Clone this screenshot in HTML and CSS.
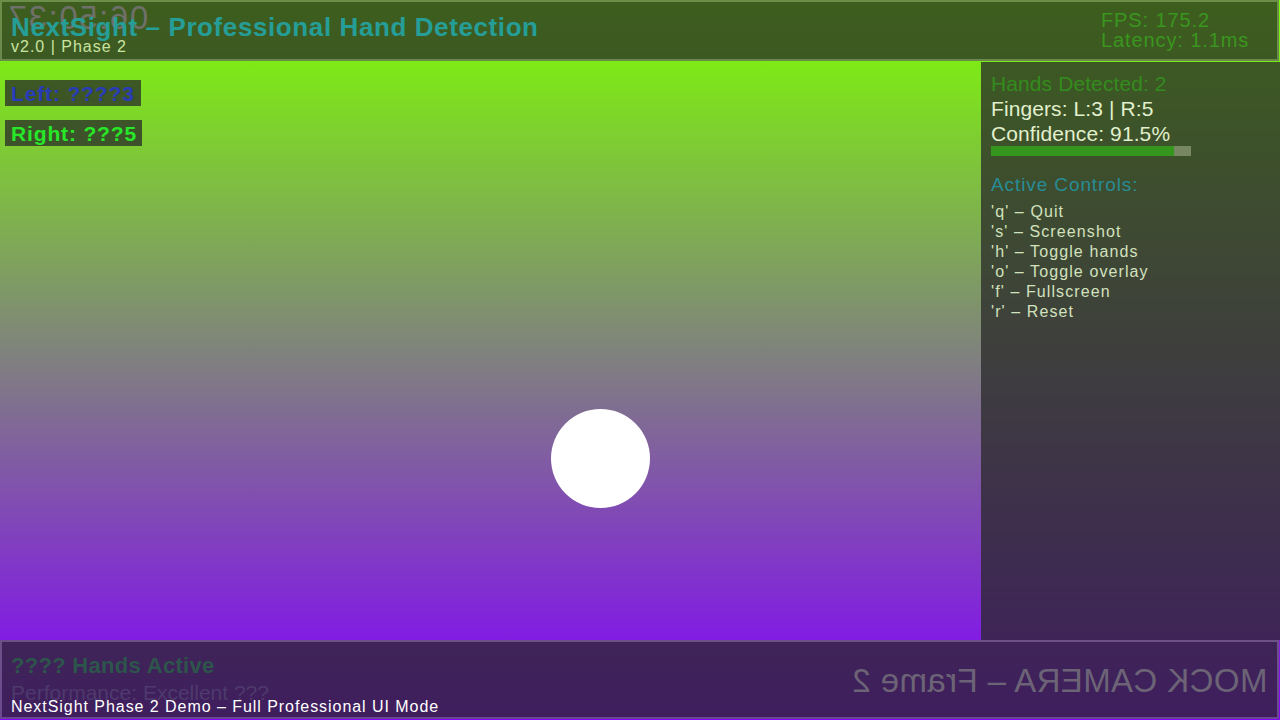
FILE: index.html
```html
<!DOCTYPE html>
<html>
<head>
<meta charset="utf-8">
<link rel="stylesheet" href="styles.css">
</head>
<body>
<div class="app">
  <header class="topbar">
    <div class="ghost-time">06:50:37</div>
    <div class="title-block">
      <div class="title">NextSight – Professional Hand Detection</div>
      <div class="version">v2.0 | Phase 2</div>
    </div>
    <div class="perf">
      <div class="perf-line">FPS: 175.2</div>
      <div class="perf-line">Latency: 1.1ms</div>
    </div>
  </header>

  <main class="canvas">
    <div class="hand-tag tag-left">Left: ????3</div>
    <div class="hand-tag tag-right">Right: ???5</div>
    <div class="blob"></div>
  </main>

  <aside class="side">
    <div class="side-stat stat-green">Hands Detected: 2</div>
    <div class="side-stat stat-light">Fingers: L:3 | R:5</div>
    <div class="side-stat stat-light">Confidence: 91.5%</div>
    <div class="conf-bar"><div class="conf-fill" style="width: 91.5%"></div></div>
    <div class="controls-title">Active Controls:</div>
    <ul class="controls">
      <li>'q' – Quit</li>
      <li>'s' – Screenshot</li>
      <li>'h' – Toggle hands</li>
      <li>'o' – Toggle overlay</li>
      <li>'f' – Fullscreen</li>
      <li>'r' – Reset</li>
    </ul>
  </aside>

  <footer class="bottombar">
    <div class="bottom-left">
      <div class="active">???? Hands Active</div>
      <div class="perf-status">Performance: Excellent ???</div>
      <div class="demo">NextSight Phase 2 Demo – Full Professional UI Mode</div>
    </div>
    <div class="mock">MOCK CAMERA – Frame 2</div>
  </footer>
</div>
</body>
</html>
```

FILE: styles.css
```css
* { box-sizing: border-box; margin: 0; padding: 0; }

html, body {
  width: 1280px;
  height: 720px;
  overflow: hidden;
}

body {
  background: linear-gradient(to bottom, rgb(125,255,0), rgb(130,0,255));
  font-family: "Liberation Sans", Arial, sans-serif;
}

.app {
  display: grid;
  grid-template-columns: 981px 299px;
  grid-template-rows: 62px 578px 80px;
  width: 1280px;
  height: 720px;
}

/* ---------- top bar ---------- */
.topbar {
  grid-column: 1 / 3;
  position: relative;
  width: 1279px;
  height: 61px;
  border: 2px solid rgba(100,100,100,0.73);
  background: rgba(40,40,40,0.75);
  background-clip: padding-box;
  display: flex;
  justify-content: space-between;
}

.ghost-time {
  position: absolute;
  left: 5px;
  top: 1px;
  font-size: 33px;
  line-height: 30px;
  color: rgb(110,112,105);
  transform: scaleX(-1);
  letter-spacing: 1.6px;
  white-space: nowrap;
}

.title-block {
  position: relative;
  padding: 12px 0 0 9px;
}

.title {
  font-weight: bold;
  font-size: 26px;
  line-height: 26px;
  color: rgb(38,158,152);
  letter-spacing: 0.6px;
  white-space: nowrap;
}

.version {
  font-size: 16px;
  line-height: 14px;
  color: rgb(200,228,160);
  letter-spacing: 1px;
  white-space: nowrap;
}

.perf {
  padding: 8px 0 0 0;
  width: 176px;
}

.perf-line {
  font-size: 20px;
  line-height: 20px;
  color: rgb(58,150,30);
  letter-spacing: 0.9px;
  white-space: nowrap;
}

/* ---------- camera canvas ---------- */
.canvas {
  position: relative;
  padding: 18px 0 0 5px;
  display: flex;
  flex-direction: column;
  align-items: flex-start;
  gap: 14px;
}

.hand-tag {
  height: 26px;
  padding: 1px 0 0 6px;
  background: rgba(40,40,40,0.75);
  font-weight: bold;
  font-size: 21px;
  line-height: 25px;
  letter-spacing: 0.85px;
  white-space: nowrap;
}

.tag-left { color: rgb(40,60,185); width: 136px; }
.tag-right { color: rgb(40,230,40); width: 137px; }

.blob {
  position: absolute;
  left: 551px;
  top: 347px;
  width: 99px;
  height: 99px;
  border-radius: 50%;
  background: #fff;
}

/* ---------- side panel ---------- */
.side {
  background: rgba(40,40,40,0.75);
  padding: 9px 0 0 10px;
}

.side-stat {
  font-size: 21px;
  line-height: 25px;
  letter-spacing: 0.1px;
  white-space: nowrap;
}

.stat-green { color: rgb(52,140,30); }
.stat-light { color: rgb(225,240,205); }

.conf-bar {
  margin-top: 0;
  width: 200px;
  height: 10px;
  background: rgb(118,135,98);
}

.conf-fill {
  height: 100%;
  background: rgb(52,150,28);
}

.controls-title {
  margin-top: 18px;
  font-size: 19px;
  line-height: 22px;
  color: rgb(40,140,150);
  letter-spacing: 0.9px;
  white-space: nowrap;
}

.controls {
  list-style: none;
  margin-top: 6px;
}

.controls li {
  font-size: 16px;
  line-height: 20px;
  color: rgb(210,225,190);
  letter-spacing: 1.1px;
  white-space: nowrap;
}

/* ---------- bottom bar ---------- */
.bottombar {
  grid-column: 1 / 3;
  width: 1279px;
  height: 79px;
  border: 2px solid rgba(100,100,100,0.73);
  background: rgba(40,40,40,0.75);
  background-clip: padding-box;
  display: flex;
  justify-content: space-between;
}

.bottom-left {
  padding: 12px 0 0 9px;
  position: relative;
}

.active {
  font-weight: bold;
  font-size: 22px;
  line-height: 24px;
  color: rgb(45,85,75);
  letter-spacing: 0.3px;
  white-space: nowrap;
}

.perf-status {
  margin-top: 4px;
  font-size: 21px;
  line-height: 22px;
  color: rgb(78,58,108);
  letter-spacing: 0;
  white-space: nowrap;
}

.demo {
  position: absolute;
  left: 9px;
  top: 57px;
  font-size: 16px;
  line-height: 16px;
  color: #fff;
  letter-spacing: 0.95px;
  white-space: nowrap;
}

.mock {
  align-self: flex-start;
  margin: 24px 10px 0 0;
  font-size: 33px;
  line-height: 30px;
  color: rgb(108,100,118);
  transform: scaleX(-1);
  letter-spacing: 0.4px;
  white-space: nowrap;
}
```
